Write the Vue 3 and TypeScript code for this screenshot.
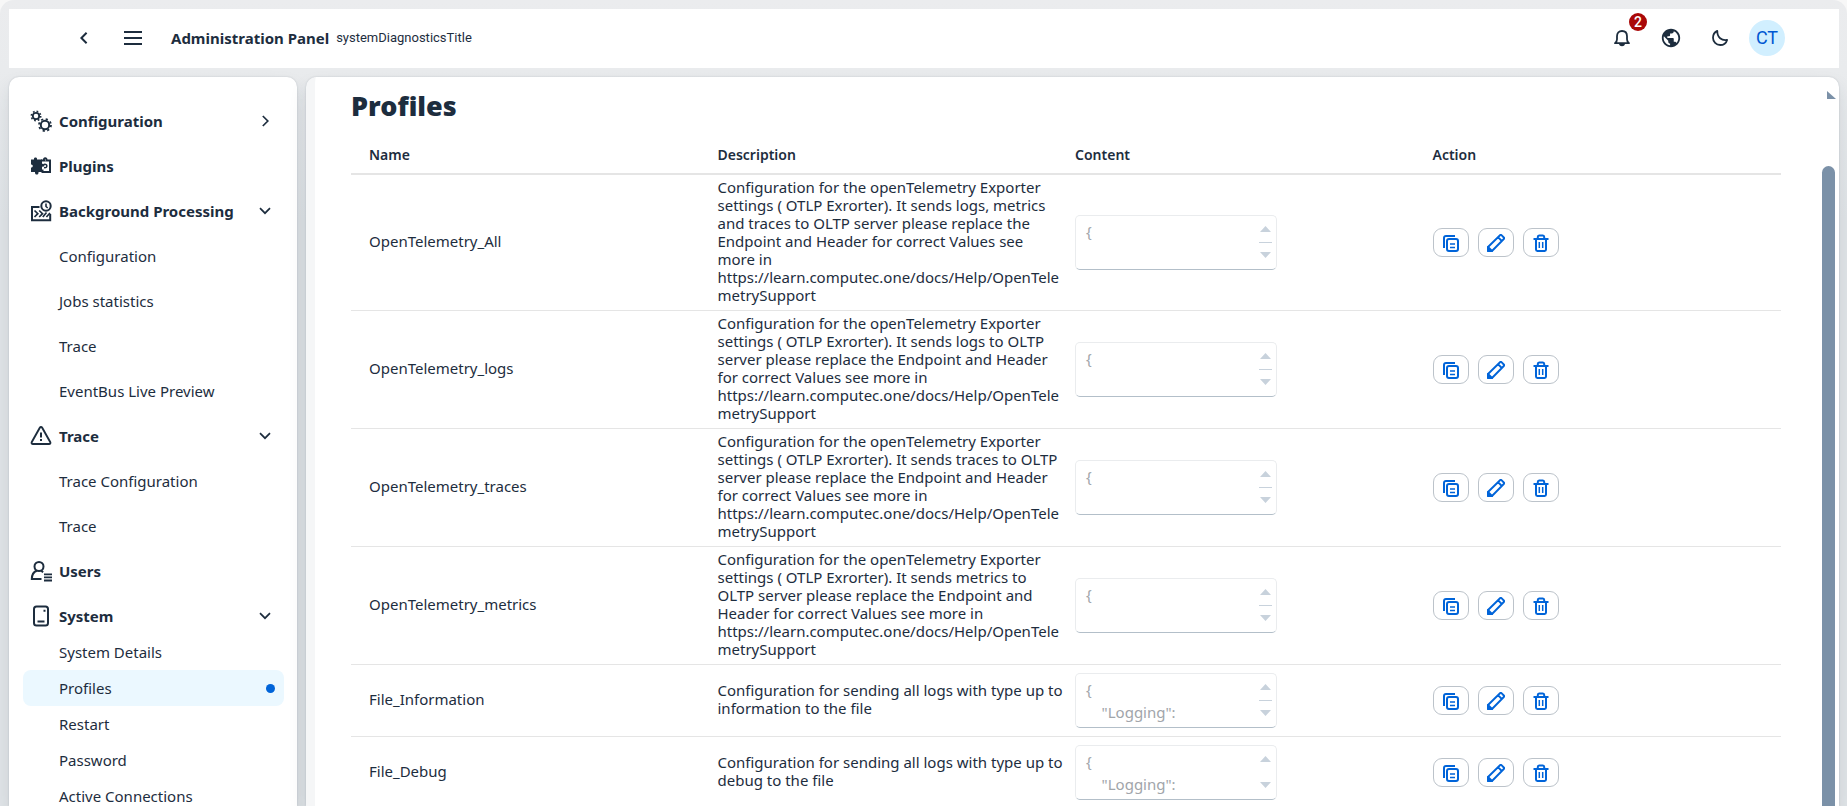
<script setup lang="ts">
import { ref } from 'vue'

interface NavChild { label: string; active?: boolean }
interface NavGroup {
  label: string
  icon: 'cogs' | 'plugin' | 'process' | 'alert' | 'users' | 'system'
  expanded?: boolean
  compact?: boolean
  children?: NavChild[]
}
interface Profile { name: string; description: string; content: string; short?: boolean }

const groups: NavGroup[] = [
  { label: 'Configuration', icon: 'cogs', expanded: false },
  { label: 'Plugins', icon: 'plugin' },
  {
    label: 'Background Processing', icon: 'process', expanded: true,
    children: [{ label: 'Configuration' }, { label: 'Jobs statistics' }, { label: 'Trace' }, { label: 'EventBus Live Preview' }],
  },
  { label: 'Trace', icon: 'alert', expanded: true, children: [{ label: 'Trace Configuration' }, { label: 'Trace' }] },
  { label: 'Users', icon: 'users' },
  {
    label: 'System', icon: 'system', expanded: true, compact: true,
    children: [
      { label: 'System Details' }, { label: 'Profiles', active: true }, { label: 'Restart' },
      { label: 'Password' }, { label: 'Active Connections' },
    ],
  },
]

const url = 'https://learn.computec.one/docs/Help/OpenTele\nmetrySupport'
const logging = '{\n    "Logging":'

const profiles = ref<Profile[]>([
  {
    name: 'OpenTelemetry_All', content: '{\n',
    description: 'Configuration for the openTelemetry Exporter\nsettings ( OTLP Exrorter). It sends logs, metrics\nand traces to OLTP server please replace the\nEndpoint and Header for correct Values see\nmore in\n' + url,
  },
  {
    name: 'OpenTelemetry_logs', content: '{\n',
    description: 'Configuration for the openTelemetry Exporter\nsettings ( OTLP Exrorter). It sends logs to OLTP\nserver please replace the Endpoint and Header\nfor correct Values see more in\n' + url,
  },
  {
    name: 'OpenTelemetry_traces', content: '{\n',
    description: 'Configuration for the openTelemetry Exporter\nsettings ( OTLP Exrorter). It sends traces to OLTP\nserver please replace the Endpoint and Header\nfor correct Values see more in\n' + url,
  },
  {
    name: 'OpenTelemetry_metrics', content: '{\n',
    description: 'Configuration for the openTelemetry Exporter\nsettings ( OTLP Exrorter). It sends metrics to\nOLTP server please replace the Endpoint and\nHeader for correct Values see more in\n' + url,
  },
  { name: 'File_Information', content: logging, description: 'Configuration for sending all logs with type up to\ninformation to the file' },
  { name: 'File_Debug', content: logging, short: true, description: 'Configuration for sending all logs with type up to\ndebug to the file' },
])
</script>

<template>
  <div class="shell">
    <header class="topbar">
      <button class="tool" aria-label="Back">
        <svg width="18" height="18" viewBox="0 0 18 18"><path d="M11.6 3.8 6.4 9l5.2 5.2" fill="none" stroke="currentColor" stroke-width="2" /></svg>
      </button>
      <button class="tool" aria-label="Menu">
        <svg width="18" height="18" viewBox="0 0 18 18"><path d="M0 3h18M0 9h18M0 15h18" stroke="currentColor" stroke-width="2" /></svg>
      </button>
      <strong class="app-title">Administration Panel</strong>
      <span class="app-subtitle">systemDiagnosticsTitle</span>
      <div class="tools">
        <button class="tool" aria-label="Notifications">
          <svg width="18" height="18" viewBox="0 0 18 18"><path d="M2 14.200c1.300-1 2-2 2-4V7.200C4 4 6 2 9 2s5 2 5 5.200v3c0 2 .7 3 2 4z" fill="none" stroke="currentColor" stroke-width="1.800" stroke-linejoin="round" /><path d="M6 15h6c-.4 1.500-1.400 2.200-3 2.200S6.400 16.500 6 15z" fill="currentColor" /></svg>
          <span class="badge">2</span>
        </button>
        <button class="tool" aria-label="Language">
          <svg width="22" height="22" viewBox="0 0 24 24"><path d="M12 2C6.480 2 2 6.480 2 12s4.480 10 10 10 10-4.480 10-10S17.520 2 12 2zm-1 17.930c-3.950-.49-7-3.850-7-7.930 0-.62.080-1.210.21-1.790L9 15v1c0 1.100.9 2 2 2v1.930zm6.900-2.540c-.26-.81-1-1.390-1.900-1.390h-1v-3c0-.55-.45-1-1-1H8v-2h2c.55 0 1-.45 1-1V7h2c1.100 0 2-.9 2-2v-.41c2.930 1.190 5 4.060 5 7.410 0 2.080-.8 3.970-2.100 5.390z" fill="currentColor" /></svg>
        </button>
        <button class="tool" aria-label="Dark mode">
          <svg width="18" height="18" viewBox="0 0 18 18"><path d="M6.300 1.900C4 3 2 5.600 2 8.800c0 4 3.200 7.200 7.200 7.200 3.300 0 6-2 6.900-5.100C10.800 11.800 6 8.500 6.300 1.900z" fill="none" stroke="currentColor" stroke-width="1.800" stroke-linejoin="round" /></svg>
        </button>
        <button class="avatar" aria-label="User profile">CT</button>
      </div>
    </header>

    <div class="body">
      <nav class="sidebar" aria-label="Administration">
        <section v-for="g in groups" :key="g.label" :class="{ compact: g.compact }">
          <button class="group" :aria-expanded="g.expanded">
            <svg class="nav-icon" width="22" height="22" viewBox="0 0 22 22" fill="none" stroke="currentColor" stroke-width="2">
              <template v-if="g.icon === 'cogs'">
                <circle cx="6" cy="6" r="3.200" stroke-width="1.800" />
                <circle cx="6" cy="6" r="4.700" stroke-width="1.600" stroke-dasharray="1.700 1.990" />
                <circle cx="15" cy="15" r="4.200" stroke-width="2" />
                <circle cx="15" cy="15" r="6" stroke-width="1.800" stroke-dasharray="2.200 2.512" />
              </template>
              <template v-else-if="g.icon === 'plugin'">
                <path d="M1 4.500h3c-.6-2.600 3.600-2.600 3 0h5V9c3-1.300 3.500 3.800 0 2.600V17H8.500c.6 3.400-4 3.400-3.500 0H1v-4.500c2.400.4 2.400-3.400 0-3z" fill="currentColor" stroke="none" />
                <path d="M11 5.500h3c-.8-3 3.200-3 2.500 0H20V17h-7.500v-2.500" />
                <path d="M14 9.500c3.800-1 3.800 4 0 3" stroke-width="1.500" />
              </template>
              <template v-else-if="g.icon === 'process'">
                <path d="M9.500 7H2v13.200h18.200V14" />
                <circle cx="16" cy="6" r="4.700" />
                <path d="M16 3.500v3l1.700 1.500" stroke-width="1.600" />
                <path d="m4.500 10.500 3.300 3.200-3.300 3.300M9.200 10.500l3.300 3.200L9.200 17M16.500 12.500 12.800 17M20 13l-3.600 4" stroke-width="1.700" />
              </template>
              <template v-else-if="g.icon === 'alert'">
                <path d="M9.800 2.800 1.800 17c-.6 1.100 0 2 1.200 2h16c1.200 0 1.800-.9 1.200-2l-8-14.200c-.6-1-1.800-1-2.400 0z" stroke-width="1.900" />
                <path d="M11 7.500v5M11 14v2" />
              </template>
              <template v-else-if="g.icon === 'users'">
                <circle cx="9" cy="6.500" r="4.500" />
                <path d="M11.500 19H1.800c0-4 1.500-7 5-8.300M11.200 11l2 1.200" />
                <path d="M14 14.300h8M14 17.400h8M14 20.500h8" stroke-width="1.800" />
              </template>
              <template v-else>
                <rect x="4" y="1.500" width="14" height="19" rx="2.500" />
                <path d="M7.500 16.500h7M13.500 5.800h2" />
              </template>
            </svg>
            <span class="group-label">{{ g.label }}</span>
            <svg v-if="g.expanded !== undefined" class="chevron" width="12" height="12" viewBox="0 0 12 12" fill="none" stroke="currentColor" stroke-width="1.700">
              <path v-if="g.expanded" d="m1 3.200 5 5 5-5" />
              <path v-else d="m3.800 1 5 5-5 5" />
            </svg>
          </button>
          <a v-for="c in g.children" :key="c.label" href="#" class="child" :class="{ active: c.active }" :aria-current="c.active ? 'page' : undefined">
            {{ c.label }}<span v-if="c.active" class="dot"></span>
          </a>
        </section>
      </nav>

      <main class="panel">
        <div class="content">
          <h1>Profiles</h1>
          <table>
            <thead>
              <tr><th scope="col">Name</th><th scope="col">Description</th><th scope="col">Content</th><th scope="col">Action</th></tr>
            </thead>
            <tbody>
              <tr v-for="p in profiles" :key="p.name">
                <td>{{ p.name }}</td>
                <td class="description">{{ p.description }}</td>
                <td class="preview">
                  <div class="field">
                    <textarea :value="p.content" :aria-label="p.name + ' content'" readonly></textarea>
                    <svg class="scroller" width="13" height="34" viewBox="0 0 13 34" aria-hidden="true">
                      <path d="M1 7 6.500 1 12 7zM1 27h11l-5.500 6z" fill="currentColor" />
                      <path v-if="!p.short" d="M0 17.500h13" stroke="currentColor" />
                    </svg>
                  </div>
                </td>
                <td class="preview">
                  <div class="actions">
                    <button aria-label="Copy">
                      <svg width="18" height="18" viewBox="0 0 18 18" fill="none" stroke="currentColor" stroke-width="2"><path d="M2 14V4c0-1.300.7-2 2-2h9" /><rect x="5" y="5" width="11" height="12" rx="2" /><path d="M8 10h5M8 13.500h5" stroke-width="1.600" /></svg>
                    </button>
                    <button aria-label="Edit">
                      <svg width="18" height="18" viewBox="0 0 18 18" fill="none" stroke="currentColor" stroke-width="1.900" stroke-linejoin="round"><path d="M1 17v-4L13 1.200c.5-.5 1-.5 1.500 0l2.300 2.300c.5.500.5 1 0 1.500L5 17zM11 3.200 14.800 7" /><path d="M1 13v4h4z" fill="currentColor" /></svg>
                    </button>
                    <button aria-label="Delete">
                      <svg width="18" height="18" viewBox="0 0 18 18" fill="none" stroke="currentColor" stroke-width="2"><path d="M1.500 5h15M5.800 5V3c0-1 .4-1.500 1.300-1.500h3.800c.9 0 1.300.5 1.300 1.500v2M4 5v10.600c0 .9.500 1.400 1.400 1.400h7.200c.9 0 1.400-.5 1.400-1.400V5" /><path d="M7.300 8v6M10.700 8v6" stroke-width="1.500" /></svg>
                    </button>
                  </div>
                </td>
              </tr>
            </tbody>
          </table>
        </div>
        <div class="scrollbar" aria-hidden="true">
          <svg class="scroll-up" width="9" height="8" viewBox="0 0 9 8"><path d="M0 0v8h9z" fill="currentColor" /></svg>
          <div class="thumb"></div>
        </div>
      </main>
    </div>
  </div>
</template>

<style>
body { margin: 0; background: #f7f7f7; }
</style>

<style scoped>
.shell {
  box-sizing: border-box;
  display: flex;
  flex-direction: column;
  gap: 9px;
  height: 100vh;
  padding: 9px 8px 0 9px;
  overflow: hidden;
  border-radius: 14px 14px 0 0;
  background: linear-gradient(#ebecee, #e9ebed 70px, #e0e4e7 220px);
  color: #1d2d3e;
  font: 15px/18px "Noto Sans", sans-serif;
}
button {
  padding: 0;
  border: 0;
  background: none;
  color: inherit;
  font: inherit;
}
.topbar {
  box-sizing: border-box;
  display: flex;
  flex: none;
  align-items: center;
  gap: 13px;
  height: 59px;
  padding: 0 54px 2px 57px;
  background: #fff;
}
.tool {
  position: relative;
  display: flex;
  align-items: center;
  justify-content: center;
  width: 36px;
  height: 36px;
}
.app-title { margin-left: 7px; font: bold 15px/20px "Noto Sans", sans-serif; }
.app-subtitle { margin-left: -6px; font: 13px/18px Roboto, sans-serif; }
.tools { display: flex; align-items: center; gap: 13px; margin-left: auto; }
.badge {
  position: absolute;
  top: -7px;
  right: -7px;
  width: 18px;
  border-radius: 9px;
  background: #aa0808;
  color: #fff;
  font: 500 14px/18px Roboto, sans-serif;
}
.avatar {
  width: 36px;
  height: 36px;
  margin-left: -2px;
  border-radius: 50%;
  background: #d1efff;
  color: #0057d2;
  font: 18px/36px Roboto, sans-serif;
}
.body { display: flex; flex: 1; gap: 9px; min-height: 0; }
.sidebar, .panel {
  border-radius: 10px 10px 0 0;
  background: #fff;
  box-shadow: 0 0 2px rgba(34, 53, 72, 0.2), 0 9px 18px rgba(34, 53, 72, 0.1);
}
.sidebar {
  box-sizing: border-box;
  flex: none;
  width: 288px;
  padding: 21px 13px 0 14px;
  overflow: hidden;
}
.group {
  display: flex;
  align-items: center;
  gap: 7px;
  width: 100%;
  height: 45px;
  padding: 0 13px 0 7px;
  font: bold 15px/20px "Noto Sans", sans-serif;
  text-align: left;
}
.group-label { flex: 1; }
.child {
  display: flex;
  align-items: center;
  justify-content: space-between;
  height: 45px;
  padding: 0 9px 0 36px;
  border-radius: 8px;
  color: inherit;
  text-decoration: none;
}
.compact .group { height: 41px; padding-top: 4px; }
.compact .child { height: 36px; }
.active { background: #ebf8ff; }
.dot { width: 9px; height: 9px; border-radius: 50%; background: #0064d9; }
.panel {
  display: flex;
  flex: 1;
  min-width: 0;
  overflow: hidden;
  box-sizing: border-box;
  border-left: 9px solid #f5f6f7;
}
.content { flex: 1; min-width: 0; padding: 11px 41px 0 36px; }
h1 {
  margin: 0 0 11px;
  font: 900 27px/36px "Noto Sans", sans-serif;
}
table {
  width: 100%;
  table-layout: fixed;
  border-spacing: 0;
}
th {
  box-sizing: border-box;
  height: 40px;
  padding: 2px 9px 0;
  border-bottom: 2px solid #e5e5e5;
  font-size: 14px;
  font-weight: 600;
  text-align: left;
}
td {
  padding: 3px 9px 6px;
  border-bottom: 1px solid #e5e5e5;
}
th:first-child, td:first-child { padding-left: 18px; }
.description { white-space: pre; }
.preview { padding: 8px 9px; }
.field { position: relative; width: 202px; }
textarea {
  display: block;
  box-sizing: border-box;
  width: 100%;
  height: 55px;
  padding: 4px 10px 0;
  overflow: hidden;
  resize: none;
  border: 1px solid #eaecee;
  border-bottom-color: #b3bfc9;
  border-radius: 5px;
  outline: 0;
  background: #fff;
  color: #a1a5aa;
  font: 15px/23px "Noto Sans", sans-serif;
}
.scroller { position: absolute; top: 10px; right: 5px; color: #c8d2dc; }
.actions { display: flex; gap: 9px; }
.actions button {
  display: flex;
  align-items: center;
  justify-content: center;
  box-sizing: border-box;
  width: 36px;
  height: 29px;
  border: 1px solid #bcc3ca;
  border-radius: 9px;
  color: #0064d9;
}
.scrollbar {
  display: flex;
  flex-direction: column;
  flex: none;
  gap: 67px;
  width: 17px;
  padding-top: 14px;
  color: #7b91a8;
}
.scroll-up { flex: none; margin-left: 5px; }
.thumb { flex: 1; width: 13px; border-radius: 7px 7px 0 0; background: #7b91a8; }
</style>
